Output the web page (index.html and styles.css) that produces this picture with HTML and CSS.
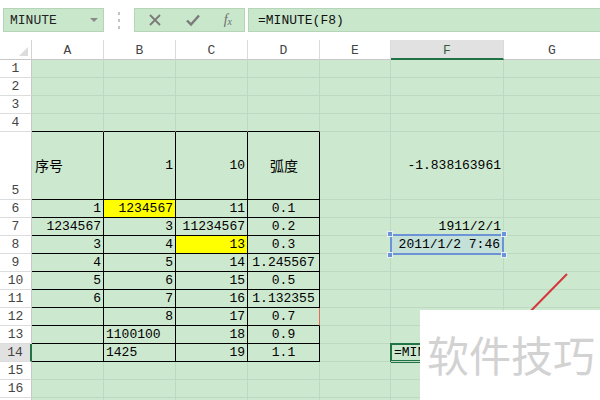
FILE: index.html
```html
<!DOCTYPE html>
<html lang="zh">
<head>
<meta charset="utf-8">
<title>MINUTE</title>
<link rel="stylesheet" href="styles.css">
</head>
<body>
<div class="app">
  <div class="fbar">
    <div class="namebox"><span>MINUTE</span><span class="caret"></span></div>
    <div class="dots"><i></i><i></i><i></i></div>
    <div class="btns">
      <svg class="ic" width="14" height="14" viewBox="0 0 14 14"><path d="M2 2 L12 12 M12 2 L2 12" stroke="#7a7a7a" stroke-width="1.8" fill="none"/></svg>
      <svg class="ic" width="16" height="14" viewBox="0 0 16 14"><path d="M2 7.5 L6 11.5 L14 2.5" stroke="#7a7a7a" stroke-width="2.4" fill="none"/></svg>
      <span class="fx">f<sub>x</sub></span>
    </div>
    <div class="formula">=MINUTE(F8)</div>
  </div>

  <div class="sheet">
    <div class="corner"></div>
    <div class="ch">A</div><div class="ch">B</div><div class="ch">C</div><div class="ch">D</div><div class="ch">E</div><div class="ch sel">F</div><div class="ch">G</div>

    <div class="rh">1</div><div class="c"></div><div class="c"></div><div class="c"></div><div class="c"></div><div class="c"></div><div class="c"></div><div class="c"></div>
    <div class="rh">2</div><div class="c"></div><div class="c"></div><div class="c"></div><div class="c"></div><div class="c"></div><div class="c"></div><div class="c"></div>
    <div class="rh">3</div><div class="c"></div><div class="c"></div><div class="c"></div><div class="c"></div><div class="c"></div><div class="c"></div><div class="c"></div>
    <div class="rh">4</div><div class="c tb"></div><div class="c tb"></div><div class="c tb"></div><div class="c tb"></div><div class="c"></div><div class="c"></div><div class="c"></div>

    <div class="rh">5</div><div class="c b mid l cjk">序号</div><div class="c b mid r">1</div><div class="c b mid r">10</div><div class="c b mid m cjk">弧度</div><div class="c"></div><div class="c mid r">-1.838163961</div><div class="c"></div>

    <div class="rh">6</div><div class="c b r">1</div><div class="c b r yellow">1234567</div><div class="c b r">11</div><div class="c b m">0.1</div><div class="c"></div><div class="c"></div><div class="c"></div>
    <div class="rh">7</div><div class="c b r">1234567</div><div class="c b r">3</div><div class="c b r">11234567</div><div class="c b m">0.2</div><div class="c"></div><div class="c r">1911/2/1</div><div class="c"></div>
    <div class="rh">8</div><div class="c b r">3</div><div class="c b r">4</div><div class="c b r yellow">13</div><div class="c b m">0.3</div><div class="c"></div><div class="c"></div><div class="c"></div>
    <div class="rh">9</div><div class="c b r">4</div><div class="c b r">5</div><div class="c b r">14</div><div class="c b m">1.245567</div><div class="c"></div><div class="c"></div><div class="c"></div>
    <div class="rh">10</div><div class="c b r">5</div><div class="c b r">6</div><div class="c b r">15</div><div class="c b m">0.5</div><div class="c"></div><div class="c"></div><div class="c"></div>
    <div class="rh">11</div><div class="c b r">6</div><div class="c b r">7</div><div class="c b r">16</div><div class="c b m">1.132355</div><div class="c"></div><div class="c"></div><div class="c"></div>
    <div class="rh">12</div><div class="c b"></div><div class="c b r">8</div><div class="c b r">17</div><div class="c b m redge">0.7</div><div class="c"></div><div class="c"></div><div class="c"></div>
    <div class="rh">13</div><div class="c b"></div><div class="c b l">1100100</div><div class="c b r">18</div><div class="c b m">0.9</div><div class="c"></div><div class="c"></div><div class="c"></div>
    <div class="rh cur">14</div><div class="c b"></div><div class="c b l">1425</div><div class="c b r">19</div><div class="c b m">1.1</div><div class="c"></div><div class="c l active"><span class="edit">=MINUTE(F8)</span></div><div class="c"></div>

    <div class="rh">15</div><div class="c"></div><div class="c"></div><div class="c"></div><div class="c"></div><div class="c"></div><div class="c"></div><div class="c"></div>
    <div class="rh">16</div><div class="c"></div><div class="c"></div><div class="c"></div><div class="c"></div><div class="c"></div><div class="c"></div><div class="c"></div>
    <div class="rh"></div><div class="c"></div><div class="c"></div><div class="c"></div><div class="c"></div><div class="c"></div><div class="c"></div><div class="c"></div>

    <div class="textbox">2011/1/2 7:46
      <i class="h tl"></i><i class="h tr"></i><i class="h bl"></i><i class="h br"></i>
    </div>
    <svg class="arrow" width="60" height="60" viewBox="0 0 60 60"><path d="M47 4 L0 52" stroke="#d6353a" stroke-width="2" fill="none"/></svg>
  </div>

  <div class="watermark">软件技巧</div>
</div>
</body>
</html>
```

FILE: styles.css
```css
* { box-sizing: border-box; }
html, body { margin: 0; padding: 0; }
body {
  width: 600px; height: 400px; overflow: hidden; background: #fff;
  font-family: "Liberation Mono", "Noto Sans CJK SC", monospace;
  font-size: 13px; color: #000;
}
.app { position: relative; width: 600px; height: 400px; overflow: hidden; }

.fbar { height: 40px; display: flex; align-items: center; padding-left: 3px; background: #fff; }
.namebox {
  width: 101px; height: 24px; background: #c9e7cb; border: 1px solid #b6d5b8;
  display: flex; align-items: center; justify-content: space-between; padding: 0 5px 0 6px;
  color: #222; font-size: 13px;
}
.caret { width: 0; height: 0; border-left: 4px solid transparent; border-right: 4px solid transparent; border-top: 4px solid #8a8a8a; }
.dots { width: 30px; display: flex; flex-direction: column; align-items: center; gap: 4px; }
.dots i { width: 2px; height: 3px; background: #c4c4c4; display: block; }
.btns {
  width: 111px; height: 24px; background: #c9e7cb; border: 1px solid #b6d5b8;
  display: flex; align-items: center; justify-content: space-between; padding: 0 12px 0 13px;
}
.fx { font-family: "Liberation Serif", serif; font-style: italic; color: #6f6f6f; font-size: 14px; }
.fx sub { font-size: 10px; vertical-align: -1px; }
.formula {
  flex: 1; height: 24px; margin-left: 3px; background: #c9e7cb; border: 1px solid #b6d5b8; border-right: none;
  display: flex; align-items: center; padding-left: 9px; color: #111;
}

.sheet {
  position: relative;
  display: grid;
  grid-template-columns: 32px 72px 72px 72px 72px 71px 113px 97px;
  grid-template-rows: 20px 18px 18px 18px 18px 68px repeat(12, 18px);
  background: #cce8cf;
}
.corner { background: #fff; border-right: 1px solid #d4d4d4; border-bottom: 1px solid #c8c8c8; position: relative; }
.corner::after {
  content: ""; position: absolute; right: 3px; bottom: 3px; width: 0; height: 0;
  border-left: 9px solid transparent; border-bottom: 9px solid #dcdcdc;
}
.ch {
  background: #fff; border-right: 1px solid #dadada; border-bottom: 1px solid #c8c8c8;
  display: flex; align-items: center; justify-content: center; color: #444; padding-top: 2px;
}
.ch.sel { background: #e1e1e1; border-bottom: 2px solid #217346; color: #2f5f3f; }
.rh {
  background: #fff; border-right: 1px solid #c8c8c8; border-bottom: 1px solid #dcdcdc;
  display: flex; align-items: flex-end; justify-content: center; color: #444; line-height: 17px;
}
.rh.cur { background: #e1e1e1; border-right: 2px solid #217346; }

.c {
  border-right: 1px solid #bfd8c1; border-bottom: 1px solid #bfd8c1;
  display: flex; align-items: flex-end; line-height: 17px; white-space: nowrap; padding: 0 2px;
}
.c.tb { border-bottom-color: #000; }
.c.b { border-right-color: #000; border-bottom-color: #000; }
.c.redge { border-right-color: #e26a55; }
.c.mid { align-items: center; }
.r { justify-content: flex-end; }
.l { justify-content: flex-start; }
.m { justify-content: center; }
.cjk { font-family: "Noto Sans CJK SC", sans-serif; font-size: 14px; padding-left: 3px; }
.yellow { background: #ffff00; }
.c.active { box-shadow: 0 0 0 1px #217346, inset 0 0 0 1px #217346; padding-left: 3px; }
.edit { display: block; max-width: 26px; overflow: hidden; }

.textbox {
  position: absolute; left: 390px; top: 194px; width: 114px; height: 21px;
  border: 2px solid #6b93d6; background: #c3e0d9;
  display: flex; align-items: center; justify-content: flex-end; padding-right: 2px;
  white-space: nowrap;
}
.h { position: absolute; width: 6px; height: 6px; background: #6b93d6; border: 1px solid #e8eefa; }
.tl { left: -5px; top: -5px; }
.tr { right: -5px; top: -5px; }
.bl { left: -5px; bottom: -5px; }
.br { right: -5px; bottom: -5px; }
.arrow { position: absolute; left: 520px; top: 230px; }

.watermark {
  position: absolute; left: 420px; top: 310px; width: 180px; height: 90px; background: #fff;
  font-family: "Noto Sans CJK SC", sans-serif; font-size: 42px; color: #d2d2d2;
  padding-left: 7px; line-height: 88px; letter-spacing: 0;
}
```
